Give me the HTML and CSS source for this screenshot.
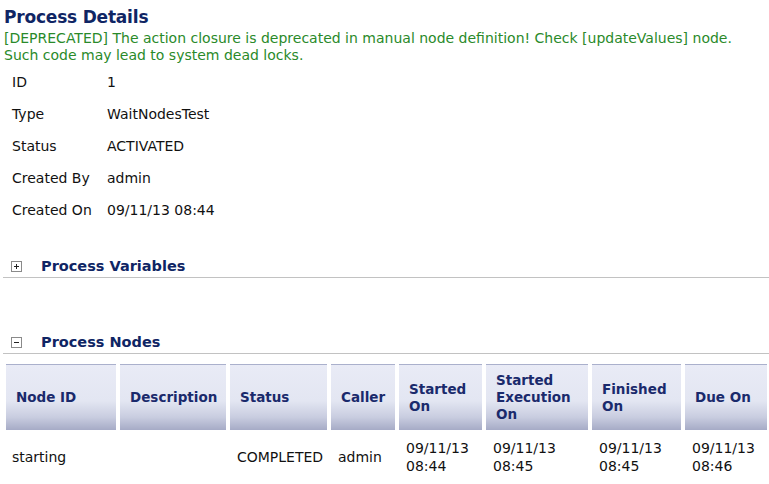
FILE: index.html
```html
<!DOCTYPE html>
<html>
<head>
<meta charset="utf-8">
<link rel="stylesheet" href="styles.css">
</head>
<body>
<div class="page">
  <h1 class="title">Process Details</h1>
  <div class="warn">[DEPRECATED] The action closure is deprecated in manual node definition! Check [updateValues] node.<br>Such code may lead to system dead locks.</div>
  <table class="info">
    <tr><td class="lbl">ID</td><td>1</td></tr>
    <tr><td class="lbl">Type</td><td>WaitNodesTest</td></tr>
    <tr><td class="lbl">Status</td><td>ACTIVATED</td></tr>
    <tr><td class="lbl">Created By</td><td>admin</td></tr>
    <tr><td class="lbl">Created On</td><td>09/11/13 08:44</td></tr>
  </table>

  <div class="section sec-vars">
    <span class="toggle"><svg width="11" height="11" viewBox="0 0 11 11"><rect x="0.5" y="0.5" width="10" height="10" fill="#fff" stroke="#8a8a8a"/><path d="M3 5.5h5M5.5 3v5" stroke="#222" stroke-width="1"/></svg></span>
    <span class="sec-title">Process Variables</span>
  </div>

  <div class="section sec-nodes">
    <span class="toggle"><svg width="11" height="11" viewBox="0 0 11 11"><rect x="0.5" y="0.5" width="10" height="10" fill="#fff" stroke="#8a8a8a"/><path d="M3 5.5h5" stroke="#222" stroke-width="1"/></svg></span>
    <span class="sec-title">Process Nodes</span>
  </div>

  <table class="nodes">
    <colgroup>
      <col class="c1"><col class="c2"><col class="c3"><col class="c4"><col class="c5"><col class="c6"><col class="c7"><col class="c8">
    </colgroup>
    <thead>
      <tr>
        <th>Node ID</th><th>Description</th><th>Status</th><th>Caller</th><th>Started On</th><th>Started Execution On</th><th>Finished On</th><th>Due On</th>
      </tr>
    </thead>
    <tbody>
      <tr>
        <td>starting</td><td></td><td>COMPLETED</td><td>admin</td><td>09/11/13 08:44</td><td>09/11/13 08:45</td><td>09/11/13 08:45</td><td>09/11/13 08:46</td>
      </tr>
    </tbody>
  </table>
</div>
</body>
</html>
```

FILE: styles.css
```css
html, body {
  margin: 0;
  padding: 0;
  background: #ffffff;
}
body {
  font-family: "DejaVu Sans", Verdana, sans-serif;
  font-size: 14px;
  color: #111;
}
.page {
  padding: 0;
}
.title {
  margin: 6px 0 0 4px;
  font-size: 17px;
  line-height: 22px;
  font-weight: bold;
  letter-spacing: -0.2px;
  color: #0f2564;
}
.warn {
  margin: 2px 0 0 4px;
  color: #2a8a2a;
  line-height: 17px;
}
.info {
  border-collapse: collapse;
  margin: 2px 0 0 6px;
}
.info td {
  height: 32px;
  padding: 0 6px;
  vertical-align: middle;
}
.info td.lbl {
  width: 83px;
}
.section {
  display: flex;
  align-items: center;
  margin-left: 3px;
  border-bottom: 1px solid #c2c2c2;
  height: 22px;
}
.sec-vars {
  margin-top: 29px;
}
.sec-nodes {
  margin-top: 53px;
}
.toggle {
  display: flex;
  width: 11px;
  height: 11px;
  margin-left: 8px;
  margin-right: 19px;
}
.sec-title {
  font-size: 14.5px;
  font-weight: bold;
  color: #0f2564;
}
.nodes {
  margin: 10px 0 0 2px;
  border-collapse: separate;
  border-spacing: 4px 0;
  table-layout: fixed;
  width: 769px;
}
.c1 { width: 110px; }
.c2 { width: 106px; }
.c3 { width: 97px; }
.c4 { width: 64px; }
.c5 { width: 83px; }
.c6 { width: 102px; }
.c7 { width: 89px; }
.c8 { width: 82px; }
.nodes th {
  height: 66px;
  padding: 0 4px 0 10px;
  text-align: left;
  vertical-align: middle;
  font-size: 13.5px;
  font-weight: bold;
  color: #1a2a6c;
  line-height: 17px;
  border-top: 1px solid #aab0cc;
  background: linear-gradient(to bottom, #e9ebf6 0%, #e3e6f2 55%, #c9cde0 80%, #a6abc6 100%);
  box-sizing: border-box;
}
.nodes td {
  height: 54px;
  padding: 0 4px 0 7px;
  vertical-align: middle;
  line-height: 18px;
  color: #111;
}
.nodes td:first-child {
  padding-left: 6px;
}
```
